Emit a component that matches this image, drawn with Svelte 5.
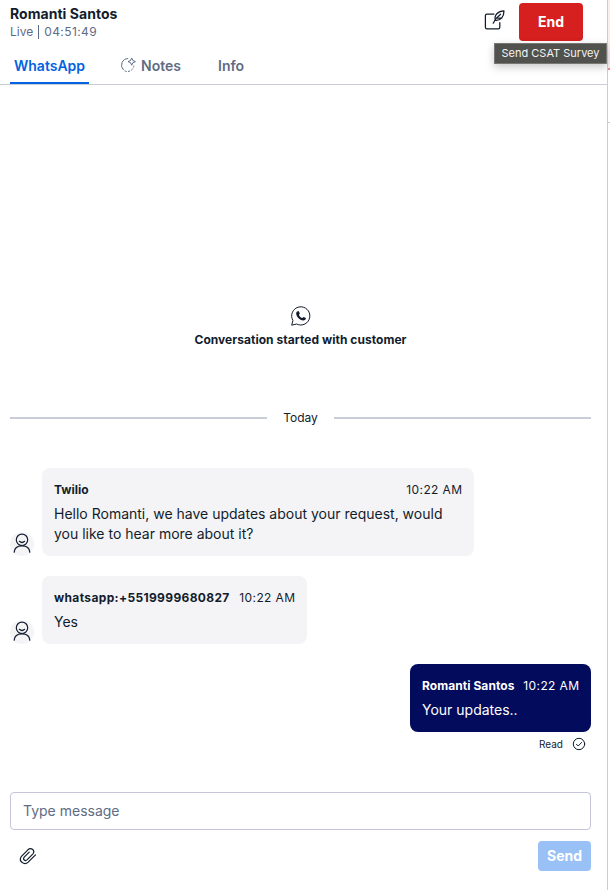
<script>
  const tabs = [
    { label: 'WhatsApp', active: true },
    { label: 'Notes', icon: true },
    { label: 'Info' }
  ];
  const messages = [
    {
      author: 'Twilio',
      time: '10:22 AM',
      lines: ['Hello Romanti, we have updates about your request, would', 'you like to hear more about it?'],
      kind: 'wide'
    },
    { author: 'whatsapp:+5519999680827', time: '10:22 AM', lines: ['Yes'], kind: 'phone' },
    { author: 'Romanti Santos', time: '10:22 AM', lines: ['Your updates..'], kind: 'own' }
  ];
</script>

<div class="screen">
  <main class="panel">
    <header>
      <div class="who">
        <h1>Romanti Santos</h1>
        <div class="status"><span>Live</span><i></i><span class="clock">04:51:49</span></div>
      </div>
      <div class="actions">
        <button class="survey" aria-label="Send CSAT Survey">
          <svg width="22" height="22" viewBox="0 0 22 22" fill="none" stroke="#121c2d" stroke-width="1.25" stroke-linecap="round" stroke-linejoin="round">
            <path d="M10 5H3Q1.4 5 1.4 6.6v11.6Q1.4 19.8 3 19.8h11.2Q15.8 19.8 15.8 18.2V13.6" />
            <path d="M9.2 14.2C11 10.4 13.6 7.4 16.6 5.2" />
            <path d="M11.4 11.3C9.8 6.4 14 1.9 20 1.8 20 7.4 16.8 12 11.4 11.3ZM13.4 9h4.4" />
          </svg>
        </button>
        <button class="end">End</button>
        <div class="tooltip">Send CSAT Survey</div>
      </div>
    </header>

    <nav>
      {#each tabs as tab}
        <div class="tab" class:active={tab.active} class:notes={tab.icon}>
          {#if tab.icon}
            <svg width="16" height="16" viewBox="0 0 16 16" fill="none" stroke="#606b85" stroke-width="1">
              <path d="M8.2 1.6A6.6 6.6 0 0 0 3.6 13" />
              <path d="M4.6 13.9A6.6 6.6 0 0 0 13.9 8.6" stroke-dasharray="2.2 1.3" />
              <path d="M11.7 1Q12.1 4.1 15.4 4.6 12.1 5.1 11.7 8.2 11.3 5.1 8 4.6 11.3 4.1 11.7 1Z" stroke-linejoin="round" />
            </svg>
          {/if}
          <span>{tab.label}</span>
        </div>
      {/each}
    </nav>

    <section class="chat">
      <div class="started">
        <svg width="20" height="20" viewBox="0 0 20 20">
          <path d="M.7 19.2 1.9 14.5A9.1 9.1 0 1 1 5.6 18Z" fill="none" stroke="#121c2d" stroke-width="1" stroke-linejoin="round" />
          <path d="M6.9 5.2 7.9 5.3 8.8 7.6 7.9 8.9C8.7 10.5 9.8 11.5 11.4 12.1L12.5 10.9 14.9 12.1C15.1 13.5 13.7 14.6 12.4 14.6 8.6 14.4 5.2 10.7 5.2 7.6 5.2 6.4 5.8 5.4 6.9 5.2Z" fill="#121c2d" />
        </svg>
        <strong>Conversation started with customer</strong>
      </div>

      <div class="day"><i></i><span>Today</span><i></i></div>

      {#each messages as m}
        <div class="row {m.kind}">
          {#if m.kind !== 'own'}
            <div class="avatar">
              <svg width="24" height="24" viewBox="0 0 24 24" fill="none" stroke="#121c2d" stroke-width="1.2" stroke-linecap="round">
                <circle cx="12" cy="7.8" r="5.7" />
                <path d="M9.4 9.3Q12 11.7 14.6 9.3M4.2 20.2C4.5 15.7 8 13.9 12 13.9s7.5 1.8 7.8 6.3" />
              </svg>
            </div>
          {/if}
          <article>
            <div class="meta"><b>{m.author}</b><time>{m.time}</time></div>
            <div class="body">
              {#each m.lines as line}<p>{line}</p>{/each}
            </div>
          </article>
        </div>
      {/each}

      <div class="receipt">
        <span>Read</span>
        <svg width="14" height="14" viewBox="0 0 14 14" fill="none" stroke="#121c2d" stroke-width="1" stroke-linecap="round" stroke-linejoin="round">
          <circle cx="7" cy="7" r="5.7" /><path d="M4.5 7.3 6.2 9 9.6 5.5" />
        </svg>
      </div>
    </section>

    <footer>
      <div class="field">Type message</div>
      <div class="tools">
        <svg width="18" height="18" viewBox="0 0 18 18" fill="none" stroke="#121c2d" stroke-width="1.2" stroke-linecap="round" stroke-linejoin="round">
          <path d="M16.5 7.8 9.2 15.1C5.5 18.5-.8 14.5 2.2 9.7L8.9 2.8C12.2-.4 16.7 3.8 13.7 7.1L8 12.9C5.9 14.6 3.6 12.3 5.2 10.2L10.2 5.2" />
        </svg>
        <button class="send">Send</button>
      </div>
    </footer>
  </main>
  <aside><div class="alert"></div><div class="line"></div></aside>
</div>

<style>
  :global(body) { background: #fff; }
  * { box-sizing: border-box; }
  .screen {
    display: flex; width: 610px; height: 890px; overflow: hidden;
    font-family: Inter, "Liberation Sans", sans-serif; color: #121c2d; white-space: nowrap;
  }
  .panel { width: 608px; height: 890px; border-right: 1px solid #cacdd8; display: flex; flex-direction: column; }
  aside { width: 2px; }
  .alert { height: 70px; background: #fdeeee; border-bottom: 2px solid #f58a8a; }
  .line { height: 53px; border-bottom: 1px solid #cacdd8; }
  h1, p { margin: 0; }
  button { font: inherit; border: 0; padding: 0; background: none; }
  svg { display: block; flex: none; }

  header { height: 48px; display: flex; justify-content: space-between; padding: 3px 24px 0 10px; }
  h1 { font-size: 14px; line-height: 20px; font-weight: 700; margin-top: 1px; letter-spacing: .04px; }
  .status { display: flex; align-items: center; height: 16px; font-size: 12px; line-height: 16px; color: #606b85; }
  .status i { width: 1px; height: 14px; background: #606b85; margin: 0 5px; }
  .clock { letter-spacing: .4px; }
  .actions { display: flex; position: relative; height: 38px; }
  .survey { width: 22px; height: 22px; margin: 6px 13px 0 0; }
  .end { width: 64px; height: 38px; padding-bottom: 2px; border-radius: 4px; background: #d61f1f; color: #fff; font-size: 14px; font-weight: 700; }
  .tooltip {
    position: absolute; left: 10px; top: 40px; width: 113px; height: 21px; z-index: 2;
    background: #51514d; border: 1px solid #777773; color: #f4f4f2; box-shadow: 0 3px 9px rgba(0, 0, 0, .22);
    font-size: 11px; line-height: 19px; text-align: center; letter-spacing: 0;
  }

  nav { height: 37px; display: flex; border-bottom: 1px solid #cacdd8; padding-left: 10px; }
  .tab { display: flex; height: 36px; align-items: center; font-size: 14px; font-weight: 600; color: #606b85; margin-right: 28px; padding: 0 4px 2px; }
  .tab.active { color: #0263e0; border-bottom: 2px solid #0263e0; width: 79px; padding-bottom: 0; }
  .tab.notes { gap: 5px; width: 69px; padding-left: 3px; }

  .chat { height: 707px; padding: 0 16px 0 10px; display: flex; flex-direction: column; }
  .started { margin-top: 221px; display: flex; flex-direction: column; align-items: center; }
  .started strong { font-size: 12px; line-height: 20px; margin-top: 4px; font-weight: 700; letter-spacing: .04px; }
  .day { display: flex; align-items: center; height: 20px; margin: 58px 0 40px; gap: 16px; }
  .day i { flex: 1; height: 2px; background: #cacdd8; }
  .day span { font-size: 12px; padding-bottom: 2px; }

  .row { display: flex; align-items: flex-end; margin-bottom: 20px; }
  .avatar { width: 24px; height: 24px; margin-right: 8px; border-radius: 50%; background: #f4f4f6; }
  article { border-radius: 8px; background: #f4f4f6; padding: 12px; }
  .wide article { width: 432px; height: 88px; }
  .phone article { width: 265px; height: 68px; }
  .phone b { letter-spacing: .35px; }
  .own { justify-content: flex-end; margin-bottom: 4px; }
  .own article { width: 181px; height: 68px; background: #030b5d; color: #fff; }
  .meta { display: flex; justify-content: space-between; font-size: 12px; line-height: 20px; }
  .meta b { font-weight: 700; }
  .own b { letter-spacing: .06px; }
  .meta time { letter-spacing: .37px; margin-right: -.37px; }
  .body { margin-top: 4px; font-size: 14px; line-height: 20px; }
  .receipt { display: flex; justify-content: flex-end; align-items: center; height: 16px; gap: 9px; padding-right: 5px; font-size: 10px; }

  footer { padding: 0 16px 0 10px; }
  .field { height: 38px; border: 1px solid #c5c5d9; border-radius: 4px; padding-left: 12px; font-size: 14px; line-height: 36px; color: #606b85; }
  .tools { display: flex; justify-content: space-between; margin-top: 11px; padding-left: 9px; }
  .tools svg { margin-top: 6px; }
  .send { width: 53px; height: 30px; padding-bottom: 1px; border-radius: 4px; background: #99c1f5; color: #fff; font-size: 14px; font-weight: 700; }
</style>
